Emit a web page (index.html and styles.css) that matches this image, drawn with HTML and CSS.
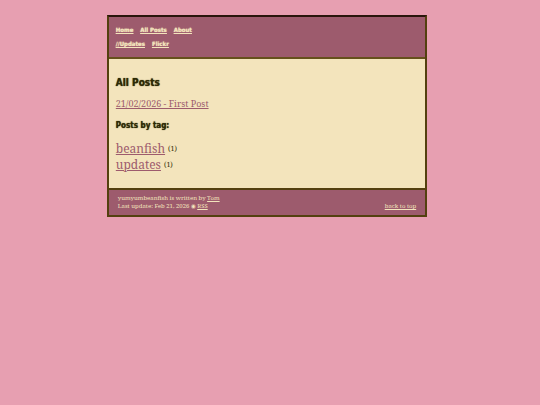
FILE: index.html
```html
<!DOCTYPE html>
<html lang="en">
<head>
    <meta charset="UTF-8">
    <meta name="viewport" content="width=device-width, initial-scale=1.0">
    <title>All Posts</title>
    <link rel="stylesheet" href="styles.css">
</head>
<body>
    <div class="container">
        <header>
            <nav>
                <ul>
                    <li><a href="#">Home</a></li>
                    <li><a href="#">All Posts</a></li>
                    <li><a href="#">About</a></li>
                </ul>
                <ul>
                    <li><a href="#">//Updates</a></li>
                    <li><a href="#">Flickr</a></li>
                </ul>
            </nav>
        </header>

        <main>
            <h1>All Posts</h1>
            <p class="post"><a href="#">21/02/2026 - First Post</a></p>
            <h2>Posts by tag:</h2>
            <ul class="tags">
                <li><a href="#">beanfish</a> <span class="count">(1)</span></li>
                <li><a href="#">updates</a> <span class="count">(1)</span></li>
            </ul>
        </main>

        <footer>
            <div>
                <p>yumyumbeanfish is written by <a href="#">Tom</a></p>
                <p>Last update: Feb 21, 2026 ◉ <a href="#">RSS</a></p>
            </div>
            <a href="#">back to top</a>
        </footer>
    </div>
</body>
</html>
```

FILE: styles.css
```css
* {
    box-sizing: border-box;
}

body {
    margin: 0;
    padding: 15px 6px 15px 0;
    background-color: #e79fb1;
    color: #2e2a05;
    font-family: "Noto Serif", "DejaVu Serif Condensed", "DejaVu Serif", serif;
}

.container {
    width: 60%;
    max-width: 960px;
    margin: 0 auto;
    border: 2px solid #53400f;
    border-top-color: #2a150c;
    background-color: #f3e4bc;
}

h1, h2, p, ul {
    margin: 0;
    padding: 0;
    list-style: none;
}

header, footer {
    background-color: #9d5b6d;
    color: #f3e4bc;
}

header a, footer a {
    color: #f3e4bc;
}

header {
    padding: 6px 7px;
    border-bottom: 2px solid #66501c;
}

nav ul {
    display: flex;
    column-gap: 7px;
    font-family: "DejaVu Sans Condensed", "DejaVu Sans", sans-serif;
    font-size: 6px;
    font-weight: bold;
    line-height: 14px;
    text-shadow: 0 0 1px #f3e4bc;
}

main {
    padding: 16px 7px 15px;
}

h1, h2 {
    font-family: "DejaVu Sans Condensed", "DejaVu Sans", sans-serif;
    font-weight: bold;
    text-shadow: 0 0 1px #2e2a05;
}

h1 {
    font-size: 10px;
    line-height: 16px;
}

h2 {
    margin-bottom: 9px;
    font-size: 8px;
    line-height: 12px;
}

main a {
    color: #9d5b6d;
}

.post {
    margin: 6px 0 9px;
    font-size: 9px;
    line-height: 14px;
}

.tags li {
    display: flex;
    align-items: center;
    column-gap: 3px;
    font-size: 12px;
    line-height: 16px;
}

.tags .count {
    font-size: 7px;
}

footer {
    display: flex;
    justify-content: space-between;
    align-items: flex-end;
    padding: 4px 9px 5px;
    border-top: 2px solid #53400f;
    font-size: 6px;
    line-height: 8px;
}
```
